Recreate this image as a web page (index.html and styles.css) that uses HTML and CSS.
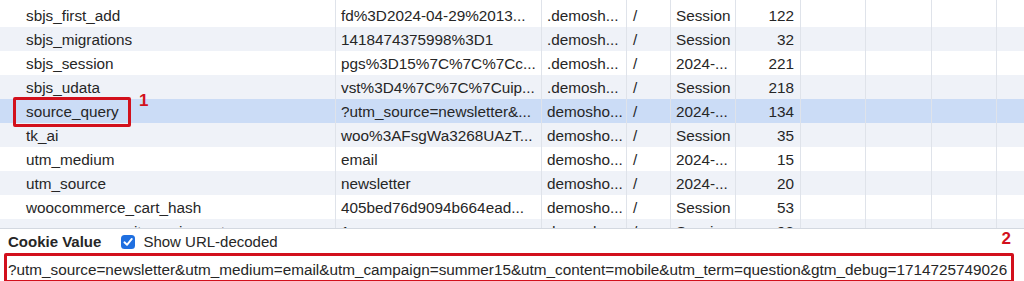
FILE: index.html
```html
<!DOCTYPE html>
<html>
<head>
<meta charset="utf-8">
<link rel="stylesheet" href="styles.css">
</head>
<body>
<div class="table">
  <div class="row top-gap">
    <div class="c name"></div><div class="c"></div><div class="c"></div><div class="c"></div><div class="c"></div><div class="c"></div><div class="c"></div><div class="c"></div><div class="c"></div><div class="c last"></div>
  </div>
  <div class="row">
    <div class="c name">sbjs_first_add</div><div class="c">fd%3D2024-04-29%2013...</div><div class="c">.demosh...</div><div class="c path">/</div><div class="c">Session</div><div class="c size">122</div><div class="c"></div><div class="c"></div><div class="c"></div><div class="c last"></div>
  </div>
  <div class="row stripe">
    <div class="c name">sbjs_migrations</div><div class="c">1418474375998%3D1</div><div class="c">.demosh...</div><div class="c path">/</div><div class="c">Session</div><div class="c size">32</div><div class="c"></div><div class="c"></div><div class="c"></div><div class="c last"></div>
  </div>
  <div class="row">
    <div class="c name">sbjs_session</div><div class="c">pgs%3D15%7C%7C%7Cc...</div><div class="c">.demosh...</div><div class="c path">/</div><div class="c">2024-...</div><div class="c size">221</div><div class="c"></div><div class="c"></div><div class="c"></div><div class="c last"></div>
  </div>
  <div class="row stripe">
    <div class="c name">sbjs_udata</div><div class="c">vst%3D4%7C%7C%7Cuip...</div><div class="c">.demosh...</div><div class="c path">/</div><div class="c">Session</div><div class="c size">218</div><div class="c"></div><div class="c"></div><div class="c"></div><div class="c last"></div>
  </div>
  <div class="row selected">
    <div class="c name">source_query<span class="mark mark1"></span><span class="num num1">1</span></div><div class="c">?utm_source=newsletter&amp;...</div><div class="c">demosho...</div><div class="c path">/</div><div class="c">2024-...</div><div class="c size">134</div><div class="c"></div><div class="c"></div><div class="c"></div><div class="c last"></div>
  </div>
  <div class="row stripe">
    <div class="c name">tk_ai</div><div class="c">woo%3AFsgWa3268UAzT...</div><div class="c">demosho...</div><div class="c path">/</div><div class="c">Session</div><div class="c size">35</div><div class="c"></div><div class="c"></div><div class="c"></div><div class="c last"></div>
  </div>
  <div class="row">
    <div class="c name">utm_medium</div><div class="c">email</div><div class="c">demosho...</div><div class="c path">/</div><div class="c">2024-...</div><div class="c size">15</div><div class="c"></div><div class="c"></div><div class="c"></div><div class="c last"></div>
  </div>
  <div class="row stripe">
    <div class="c name">utm_source</div><div class="c">newsletter</div><div class="c">demosho...</div><div class="c path">/</div><div class="c">2024-...</div><div class="c size">20</div><div class="c"></div><div class="c"></div><div class="c"></div><div class="c last"></div>
  </div>
  <div class="row">
    <div class="c name">woocommerce_cart_hash</div><div class="c">405bed76d9094b664ead...</div><div class="c">demosho...</div><div class="c path">/</div><div class="c">Session</div><div class="c size">53</div><div class="c"></div><div class="c"></div><div class="c"></div><div class="c last"></div>
  </div>
  <div class="row stripe partial">
    <div class="c name">woocommerce_items_in_cart</div><div class="c">1</div><div class="c">demosho...</div><div class="c path">/</div><div class="c">Session</div><div class="c size">93</div><div class="c"></div><div class="c"></div><div class="c"></div><div class="c last"></div>
  </div>
</div>
<div class="panel">
  <div class="panel-head">
    <span class="label">Cookie Value</span>
    <span class="check"><svg width="14" height="14" viewBox="0 0 14 14"><rect x="0" y="0" width="14" height="14" rx="3.5" fill="#1f6fe0"/><path d="M3.4 7.3 L6 9.8 L10.8 3.9" fill="none" stroke="#fff" stroke-width="1.9" stroke-linecap="round" stroke-linejoin="round"/></svg></span>
    <span class="check-label">Show URL-decoded</span>
    <span class="num num2">2</span>
  </div>
  <div class="value-box">?utm_source=newsletter&amp;utm_medium=email&amp;utm_campaign=summer15&amp;utm_content=mobile&amp;utm_term=question&amp;gtm_debug=1714725749026</div>
</div>
</body>
</html>
```
FILE: styles.css
```css
html, body {
  margin: 0;
  padding: 0;
  background: #ffffff;
  font-family: "Liberation Sans", Arial, sans-serif;
  color: #262626;
  font-size: 15.3px;
  overflow: hidden;
}
.table {
  border-bottom: 1px solid #d3d8e0;
}
.row {
  display: grid;
  grid-template-columns: 336px 206px 85px 44px 65px 65px 65px 66px 65px 1fr;
  height: 24px;
  line-height: 26px;
  background: #ffffff;
}
.row.top-gap { height: 3px; }
.row.stripe { background: #eff2f8; }
.row.selected { background: #cbdcf6; }
.row.partial { height: 9px; overflow: hidden; }
.c {
  border-right: 1px solid #dfe3ea;
  padding: 0 5px;
  white-space: nowrap;
  overflow: hidden;
}
.c.last { border-right: none; }
.c.name { padding-left: 26px; position: relative; overflow: visible; }
.c.path { padding-left: 6px; }
.c.size { text-align: right; padding-right: 6px; }
.mark {
  position: absolute;
  box-sizing: border-box;
  border: 3px solid #d2101c;
  border-radius: 2px;
}
.mark1 { left: 13px; top: -2px; width: 118px; height: 30px; }
.num {
  color: #d2101c;
  font-weight: bold;
  font-size: 17px;
}
.num1 {
  position: absolute;
  left: 139px;
  top: -7px;
  line-height: 17px;
}
.panel {
  padding: 0 10px 0 4px;
}
.panel-head {
  display: flex;
  align-items: center;
  height: 23px;
  padding-left: 4px;
  padding-top: 1px;
  font-size: 15px;
}
.label { font-weight: bold; }
.check { display: inline-flex; margin-left: 20px; }
.check-label { margin-left: 8px; }
.num2 { margin-left: auto; margin-right: 3px; margin-top: -6px; font-size: 17px; }
.value-box {
  border: 3px solid #d2101c;
  border-radius: 2px;
  height: 22px;
  padding-top: 2px;
  line-height: 24px;
  padding-left: 1px;
  white-space: nowrap;
  overflow: hidden;
}
```
